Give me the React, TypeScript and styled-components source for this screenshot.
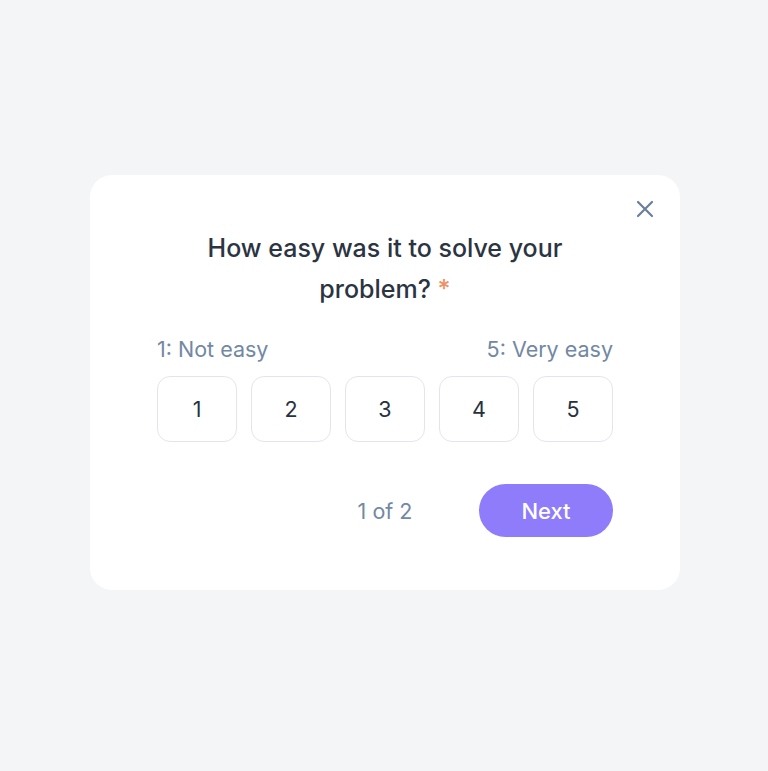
import React from "react";
import styled, { createGlobalStyle } from "styled-components";

const GlobalStyle = createGlobalStyle`
  html, body {
    margin: 0;
    padding: 0;
    background: #f3f5f7;
    font-family: Inter, "Noto Sans", sans-serif;
  }
`;

const Page = styled.div`
  width: 768px;
  height: 771px;
  display: flex;
  align-items: flex-start;
  justify-content: center;
  padding: 175px 0 0 2px;
  box-sizing: border-box;
`;

const Card = styled.div`
  position: relative;
  width: 590px;
  box-sizing: border-box;
  background: #ffffff;
  border-radius: 22px;
  padding: 53px 67px 53px;
`;

const Close = styled.button`
  position: absolute;
  top: 22px;
  right: 23px;
  width: 24px;
  height: 24px;
  padding: 0;
  border: none;
  background: transparent;
  color: #6b7f99;
  display: flex;
  align-items: center;
  justify-content: center;
  cursor: pointer;
`;

const Title = styled.h2`
  margin: 0 auto;
  max-width: 390px;
  text-align: center;
  font-size: 25px;
  line-height: 41px;
  font-weight: 500;
  color: #2b3442;
`;

const Required = styled.span`
  color: #ef9165;
`;

const Scale = styled.div`
  margin-top: 25px;
  display: flex;
  justify-content: space-between;
  font-size: 21.5px;
  line-height: 28px;
  color: #7288a3;
`;

const Options = styled.div`
  margin-top: 13px;
  display: grid;
  grid-template-columns: repeat(5, 80px);
  justify-content: space-between;
`;

const Option = styled.button`
  height: 66px;
  border: 1px solid #e2e6ec;
  border-radius: 13px;
  background: #ffffff;
  font-family: Inter, "Noto Sans", sans-serif;
  font-size: 21.5px;
  color: #273140;
  cursor: pointer;
`;

const Footer = styled.div`
  margin-top: 42px;
  display: grid;
  grid-template-columns: 1fr auto 1fr;
  align-items: center;
`;

const Progress = styled.span`
  grid-column: 2;
  font-size: 21.5px;
  color: #7288a3;
`;

const Next = styled.button`
  grid-column: 3;
  justify-self: end;
  width: 134px;
  height: 53px;
  border: none;
  border-radius: 27px;
  background: #8f7cfb;
  color: #ffffff;
  font-family: Inter, "Noto Sans", sans-serif;
  font-size: 22px;
  font-weight: 500;
  cursor: pointer;
`;

const App: React.FC = () => {
  return (
    <>
      <GlobalStyle />
      <Page>
        <Card>
          <Close aria-label="Close">
            <svg width="20" height="20" viewBox="0 0 20 20" fill="none">
              <path
                d="M3 3L17 17M17 3L3 17"
                stroke="currentColor"
                strokeWidth="2.2"
                strokeLinecap="round"
              />
            </svg>
          </Close>
          <Title>
            How easy was it to solve your problem? <Required>*</Required>
          </Title>
          <Scale>
            <span>1: Not easy</span>
            <span>5: Very easy</span>
          </Scale>
          <Options>
            {[1, 2, 3, 4, 5].map((n) => (
              <Option key={n}>{n}</Option>
            ))}
          </Options>
          <Footer>
            <Progress>1 of 2</Progress>
            <Next>Next</Next>
          </Footer>
        </Card>
      </Page>
    </>
  );
};

export default App;
